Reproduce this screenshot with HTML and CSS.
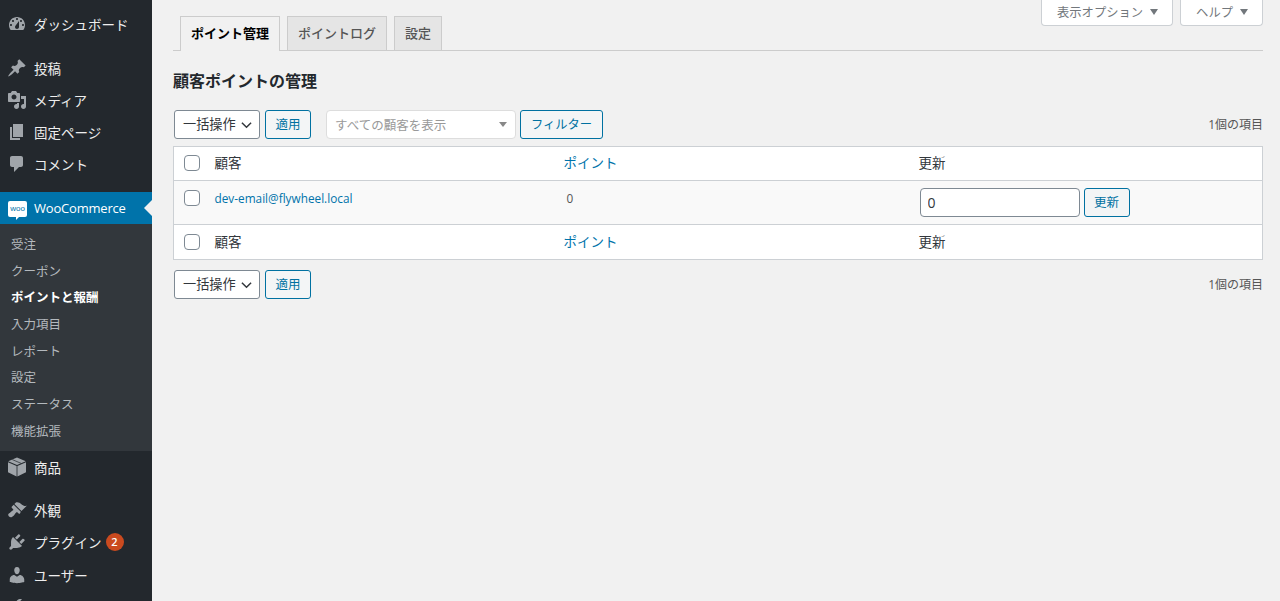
FILE: index.html
```html
<!DOCTYPE html>
<html lang="ja">
<head>
<meta charset="utf-8">
<title>ポイント管理</title>
<link rel="stylesheet" href="styles.css">
</head>
<body>
<div class="shell">
  <aside class="sidebar">
    <nav class="menu">
      <a class="item gap-after"><svg class="ico" viewBox="0 0 20 20"><path fill-rule="evenodd" d="M3.76 16h12.48c1.1-1.37 1.76-3.11 1.76-5 0-4.42-3.58-8-8-8s-8 3.58-8 8c0 1.89.66 3.63 1.76 5zM10 4c.55 0 1 .45 1 1s-.45 1-1 1-1-.45-1-1 .45-1 1-1zM6 6c.55 0 1 .45 1 1s-.45 1-1 1-1-.45-1-1 .45-1 1-1zm8 0c.55 0 1 .45 1 1s-.45 1-1 1-1-.45-1-1 .45-1 1-1zm-5.370 5.550L12 7v6c0 1.100-.9 2-2 2s-2-.9-2-2c0-.57.24-1.080.63-1.450zM4 10c.55 0 1 .45 1 1s-.45 1-1 1-1-.45-1-1 .45-1 1-1zm12 0c.55 0 1 .45 1 1s-.45 1-1 1-1-.45-1-1 .45-1 1-1z"/></svg><span>ダッシュボード</span></a>
      <a class="item"><svg class="ico" viewBox="0 0 20 20"><path d="M10.44 3.02l1.82-1.82 6.36 6.35-1.83 1.82c-1.05-.68-2.48-.57-3.41.36l-.75.75c-.92.93-1.04 2.35-.35 3.41l-1.83 1.82-2.41-2.41-2.8 2.79c-.42.42-3.38 2.71-3.8 2.29s1.86-3.39 2.28-3.81l2.79-2.79L4.1 9.36l1.83-1.82c1.05.69 2.48.57 3.4-.36l.75-.75c.93-.92 1.05-2.35.36-3.41z"/></svg><span>投稿</span></a>
      <a class="item"><svg class="ico" viewBox="0 0 20 20"><path fill-rule="evenodd" d="M13 11V4c0-.55-.45-1-1-1h-1.67L9 1H5L3.67 3H2c-.55 0-1 .45-1 1v7c0 .55.45 1 1 1h10c.55 0 1-.45 1-1zM7 4.500c1.380 0 2.500 1.120 2.500 2.500S8.380 9.500 7 9.500 4.500 8.380 4.500 7 5.620 4.500 7 4.500zM14 6h5v10.500c0 1.380-1.120 2.500-2.500 2.500S14 17.880 14 16.500s1.120-2.500 2.500-2.500c.17 0 .34.02.5.05V9h-3V6zm-4 8.050V13h2v3.500c0 1.380-1.120 2.500-2.500 2.500S7 17.880 7 16.500 8.120 14 9.500 14c.17 0 .34.02.5.05z"/></svg><span>メディア</span></a>
      <a class="item"><svg class="ico" viewBox="0 0 20 20"><path d="M6 15V2h10v13H6zm-1 1h8v2H3V5h2v11z"/></svg><span>固定ページ</span></a>
      <a class="item gap-after"><svg class="ico" viewBox="0 0 20 20"><path d="M5 2h9c1.100 0 2 .9 2 2v7c0 1.100-.9 2-2 2h-2l-5 5v-5H5c-1.100 0-2-.9-2-2V4c0-1.100.9-2 2-2z"/></svg><span>コメント</span></a>
      <a class="item current">
        <span class="woo-mark"><span class="woo-word">woo</span></span>
        <span class="woo-label">WooCommerce</span>
      </a>
      <ul class="submenu">
        <li>受注</li>
        <li>クーポン</li>
        <li class="on">ポイントと報酬</li>
        <li>入力項目</li>
        <li>レポート</li>
        <li>設定</li>
        <li>ステータス</li>
        <li>機能拡張</li>
      </ul>
      <a class="item gap-after-md"><svg class="ico" viewBox="0 0 20 20"><path d="M10 .5l8.800 3.700L10 8 1.200 4.200z M1 5.300l8.600 3.700v10.500L1 15.300z M19 5.300v10l-8.600 4.200V9z"/><path class="box-tape" d="M5.300 2.600L14 6.300"/></svg><span>商品</span></a>
      <a class="item"><svg class="ico" viewBox="0 0 20 20"><path d="M14.480 11.060L7.410 3.990l1.500-1.500c.5-.56 2.300-.47 3.510.32 1.210.8 1.430 1.280 2.910 2.100 1.180.64 2.450 1.260 4.450.85zm-.71.71L6.700 4.700 4.930 6.470c-.39.39-.39 1.020 0 1.410l1.060 1.060c.39.39.39 1.030 0 1.420-.6.6-1.430 1.110-2.210 1.690-.35.26-.7.53-1.010.84C1.430 13.230.4 14.910 2 16.510c1.600 1.600 3.280.57 4.610-.77.31-.31.58-.66.84-1.010.58-.78 1.090-1.610 1.690-2.210.39-.39 1.020-.39 1.410 0l1.060 1.060c.39.39 1.020.39 1.410 0z"/></svg><span>外観</span></a>
      <a class="item"><svg class="ico" viewBox="0 0 20 20"><path d="M13.110 4.360L9.870 7.600 8 5.730l3.240-3.240c.35-.34 1.050-.2 1.560.32.52.51.66 1.210.31 1.550zm-8 1.770l.91-1.120 9.010 9.010-1.190.84c-.71.71-2.630 1.160-3.820 1.160H6.140L4.900 17.260c-.59.59-1.540.59-2.120 0-.59-.58-.59-1.530 0-2.120l1.240-1.240v-3.880c0-1.130.4-3.190 1.090-3.890zm7.260 3.970l3.240-3.240c.34-.35 1.040-.21 1.550.31.52.51.66 1.210.31 1.550l-3.240 3.250z"/></svg><span>プラグイン</span><span class="count">2</span></a>
      <a class="item users"><svg class="ico" viewBox="0 0 20 20"><path d="M10 9.250c-2.270 0-2.730-3.440-2.730-3.440C7 4.020 7.820 2 9.970 2c2.160 0 2.980 2.020 2.710 3.810 0 0-.41 3.440-2.680 3.440zm0 2.570L12.720 10c2.390 0 4.520 2.330 4.520 4.530v2.490s-3.650 1.130-7.240 1.130c-3.650 0-7.240-1.130-7.240-1.130v-2.490c0-2.250 1.940-4.480 4.470-4.480z"/></svg><span>ユーザー</span></a>
      <a class="item"><svg class="ico" viewBox="0 0 20 20"><path d="M16.680 9.770c-1.340 1.340-3.300 1.670-4.950.99l-5.410 6.520c-.99.99-2.590.99-3.580 0s-.99-2.590 0-3.580l6.520-5.420c-.68-1.650-.35-3.610.99-4.950 1.280-1.280 3.120-1.620 4.720-1.060l-2.890 2.890 2.820 2.820 2.860-2.870c.53 1.580.18 3.390-1.080 4.660z"/></svg></a>
    </nav>
  </aside>

  <main class="content">
    <div class="screen-meta">
      <button class="meta-tab">表示オプション<i class="tri"></i></button>
      <button class="meta-tab">ヘルプ<i class="tri"></i></button>
    </div>

    <nav class="tabs">
      <a class="tab active">ポイント管理</a>
      <a class="tab">ポイントログ</a>
      <a class="tab">設定</a>
    </nav>

    <h2 class="title">顧客ポイントの管理</h2>

    <div class="toolbar">
      <div class="select">一括操作<svg class="chev" viewBox="0 0 12 8"><path d="M1 1.500l5 5 5-5"/></svg></div>
      <button class="btn">適用</button>
      <div class="customer-filter"><span>すべての顧客を表示</span><i class="tri small"></i></div>
      <button class="btn">フィルター</button>
      <span class="num">1個の項目</span>
    </div>

    <table class="points">
      <thead>
        <tr>
          <th class="c-check"><input class="check" type="checkbox"></th>
          <th class="c-customer">顧客</th>
          <th class="c-points"><a>ポイント</a></th>
          <th>更新</th>
        </tr>
      </thead>
      <tbody>
        <tr>
          <td class="c-check"><input class="check" type="checkbox"></td>
          <td class="c-customer"><a>dev-email@flywheel.local</a></td>
          <td class="c-points"><span class="zero">0</span></td>
          <td>
            <div class="update">
              <input class="points-input" type="text" value="0">
              <button class="btn">更新</button>
            </div>
          </td>
        </tr>
      </tbody>
      <tfoot>
        <tr>
          <th class="c-check"><input class="check" type="checkbox"></th>
          <th class="c-customer">顧客</th>
          <th class="c-points"><a>ポイント</a></th>
          <th>更新</th>
        </tr>
      </tfoot>
    </table>

    <div class="toolbar lower">
      <div class="select">一括操作<svg class="chev" viewBox="0 0 12 8"><path d="M1 1.500l5 5 5-5"/></svg></div>
      <button class="btn">適用</button>
      <span class="num">1個の項目</span>
    </div>
  </main>
</div>
</body>
</html>
```

FILE: styles.css
```css
* {
  box-sizing: border-box;
}

html,
body {
  margin: 0;
  height: 601px;
  overflow: hidden;
}

body {
  background: #f1f1f1;
  color: #444;
  font-family: "Open Sans", "Noto Sans CJK JP", sans-serif;
  font-size: 13px;
}

a {
  color: #0073aa;
}

.shell {
  display: flex;
  height: 601px;
  overflow: hidden;
}

/* Admin menu */
.sidebar {
  flex: 0 0 152px;
  background: #23282d;
  color: #eee;
  padding-top: 8px;
  overflow: hidden;
}

.item {
  display: flex;
  align-items: center;
  height: 32px;
  padding-left: 7px;
  color: #eee;
  font-size: 13.5px;
  position: relative;
}

.gap-after {
  margin-bottom: 12px;
}

.gap-after-md {
  margin-bottom: 11px;
}

.users {
  margin-top: 1px;
}

.ico {
  flex: 0 0 20px;
  width: 20px;
  height: 20px;
  margin-right: 7px;
  fill: #a0a5aa;
}

.box-tape {
  fill: none;
  stroke: #23282d;
  stroke-width: 0.7;
}

.current {
  background: #0073aa;
  color: #fff;
}

/* Arrow pointing from the open menu item into the page */
.current::after {
  content: "";
  position: absolute;
  right: 0;
  top: 8px;
  border: 8px solid transparent;
  border-right-color: #f1f1f1;
  border-left-width: 0;
}

.woo-label {
  font-size: 13px;
  letter-spacing: -0.2px;
}

.woo-mark {
  flex: 0 0 19px;
  width: 19px;
  height: 16px;
  margin-left: 1px;
  margin-right: 7px;
  margin-top: 1px;
  background: #fff;
  border-radius: 2px;
  display: flex;
  align-items: center;
  justify-content: center;
  position: relative;
}

.woo-mark::after {
  content: "";
  position: absolute;
  left: 8px;
  bottom: -3px;
  border-top: 3px solid #fff;
  border-left: 0 solid transparent;
  border-right: 3px solid transparent;
}

.woo-word {
  color: #0073aa;
  font-size: 8px;
  line-height: 1;
  font-family: "Liberation Sans", sans-serif;
}

.submenu {
  list-style: none;
  margin: 0;
  padding: 8px 0 5.400px;
  background: #32373c;
  color: #b4b9be;
  font-size: 12.5px;
}

.submenu li {
  height: 26.700px;
  line-height: 26px;
  padding-left: 11px;
}

.submenu .on {
  color: #fff;
  font-weight: 700;
}

.count {
  display: inline-block;
  width: 18px;
  height: 18px;
  margin-left: 4px;
  border-radius: 50%;
  background: #ca4a1f;
  color: #fff;
  font-size: 11px;
  font-weight: 600;
  line-height: 18px;
  text-align: center;
}

/* Page body */
.content {
  flex: 1;
  min-width: 0;
  padding: 0 17px 0 21px;
}

.screen-meta {
  display: flex;
  justify-content: flex-end;
  gap: 7px;
  height: 27px;
  margin-bottom: -11px;
}

.meta-tab {
  height: 26px;
  padding: 0 14px 1px 15px;
  background: #fff;
  border: 1px solid #ccd0d4;
  border-top: 0;
  border-radius: 0 0 4px 4px;
  color: #72777c;
  font: inherit;
  font-size: 12.3px;
  display: flex;
  align-items: center;
}

.tri {
  display: inline-block;
  width: 0;
  height: 0;
  margin-left: 7px;
  border-left: 4.5px solid transparent;
  border-right: 4.5px solid transparent;
  border-top: 6px solid #72777c;
}

.tabs {
  display: flex;
  gap: 7px;
  height: 35px;
  padding-left: 7px;
  border-bottom: 1px solid #ccc;
}

.tab {
  height: 34px;
  padding: 0 10px;
  background: #e5e5e5;
  border: 1px solid #ccc;
  border-bottom: 0;
  color: #555;
  font-weight: 500;
  font-size: 13px;
  line-height: 32px;
  white-space: nowrap;
}

.tab.active {
  height: 35px;
  background: #f1f1f1;
  color: #000;
  font-weight: 700;
}

.title {
  margin: 0;
  padding-top: 18px;
  height: 59px;
  color: #23282d;
  font-size: 16px;
  font-weight: 700;
  line-height: 24px;
}

.toolbar {
  display: flex;
  align-items: flex-start;
  height: 36px;
}

.toolbar.lower {
  height: 30px;
  margin-top: 10px;
}

.select {
  display: flex;
  align-items: center;
  justify-content: space-between;
  width: 86px;
  height: 29px;
  margin-left: 1px;
  padding: 0 7px 2px 8px;
  background: #fff;
  border: 1px solid #7e8993;
  border-radius: 3px;
  color: #32373c;
  font-size: 13.2px;
}

.chev {
  width: 11px;
  height: 8px;
  margin-top: 2px;
  fill: none;
  stroke: #32373c;
  stroke-width: 1.600;
}

.btn {
  width: 46px;
  height: 29px;
  margin-left: 5px;
  padding: 0 0 2px;
  background: #f3f5f6;
  border: 1px solid #0071a1;
  border-radius: 3px;
  color: #0071a1;
  font: inherit;
  font-size: 12.5px;
  white-space: nowrap;
}

.customer-filter {
  display: flex;
  align-items: center;
  justify-content: space-between;
  width: 190px;
  height: 29px;
  margin-left: 15px;
  padding: 0 8px;
  background: #fff;
  border: 1px solid #ddd;
  border-radius: 4px;
  color: #999;
  font-size: 12.5px;
}

.tri.small {
  margin-left: 0;
  margin-right: 0;
  border-top-color: #888;
  border-left-width: 4px;
  border-right-width: 4px;
  border-top-width: 5px;
}

.customer-filter + .btn {
  width: 83px;
  margin-left: 4px;
  font-size: 12.3px;
}

.num {
  margin-left: auto;
  color: #555;
  font-size: 12px;
  line-height: 29px;
}

/* Points list */
.points {
  width: 100%;
  border-collapse: collapse;
  table-layout: fixed;
  background: #fff;
  border: 1px solid #ccd0d4;
}

.points th {
  height: 35px;
  padding: 0 10px;
  text-align: left;
  font-weight: 400;
  font-size: 13.5px;
  color: #32373c;
}

.points thead th {
  height: 34px;
  padding-bottom: 4px;
  border-bottom: 1px solid #ccd0d4;
}

.points tfoot th {
  padding-bottom: 2px;
  border-top: 1px solid #ccd0d4;
}

.points td {
  height: 44px;
  padding: 0 10px;
  background: #f9f9f9;
  vertical-align: top;
}

.points td.c-customer,
.points td.c-points {
  padding-top: 8px;
  font-size: 11.8px;
  line-height: 18px;
}

.points .c-check {
  width: 33px;
  padding: 0 0 0 10px;
}

.points thead .c-check {
  padding-bottom: 2px;
}

.points td.c-check {
  padding-top: 9px;
}

.points .c-customer {
  width: 347px;
  padding-left: 8px;
}

.points .c-points {
  width: 355px;
}

.zero {
  padding-left: 3px;
  color: #555;
}

.check {
  appearance: none;
  display: block;
  width: 16px;
  height: 16px;
  margin: 0;
  background: #fff;
  border: 1px solid #7e8993;
  border-radius: 4px;
}

.update {
  display: flex;
  padding-top: 7px;
}

.points-input {
  width: 160px;
  height: 29px;
  margin-left: 1px;
  padding: 0 7px;
  background: #fff;
  border: 1px solid #7e8993;
  border-radius: 4px;
  color: #32373c;
  font: inherit;
  font-size: 14px;
}

.update .btn {
  margin-left: 4px;
}
```
